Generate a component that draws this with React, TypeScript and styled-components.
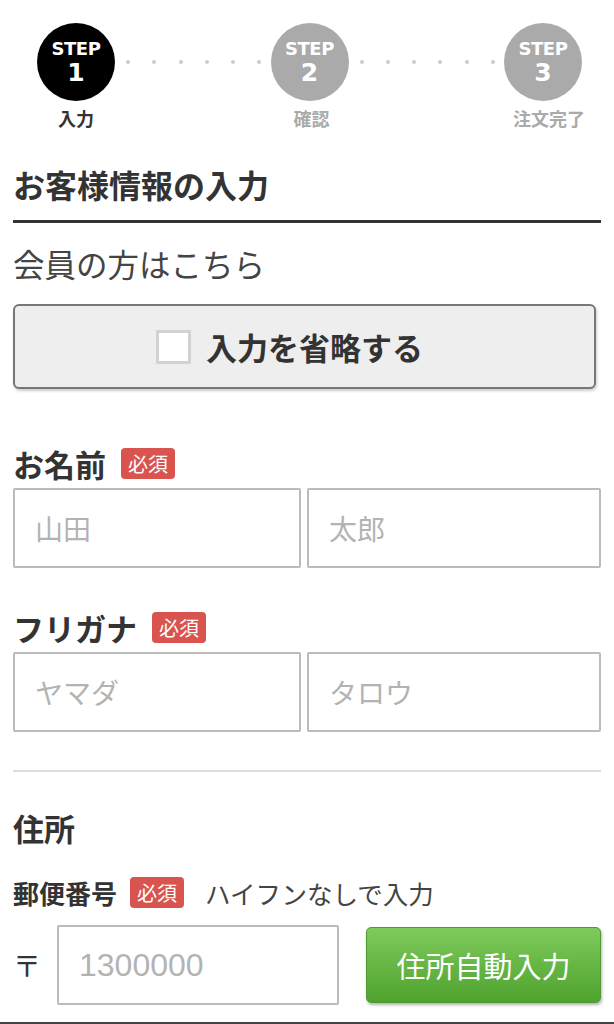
import styled, { createGlobalStyle } from "styled-components";

const GlobalStyle = createGlobalStyle`
  * {
    box-sizing: border-box;
  }

  body {
    margin: 0;
    background: #fff;
    color: #333;
    font-family: "Noto Sans CJK JP", "Noto Sans", sans-serif;
  }
`;

const Page = styled.div`
  width: 614px;
  min-height: 1024px;
  padding: 0 13px;
`;

const StepBar = styled.div`
  display: flex;
  align-items: flex-start;
  padding: 23px 19px 0 24px;
`;

const Step = styled.div`
  width: 78px;
  display: flex;
  flex-direction: column;
  align-items: center;
`;

const Circle = styled.div<{ $active?: boolean }>`
  width: 78px;
  height: 78px;
  border-radius: 50%;
  background: ${(p) => (p.$active ? "#000" : "#aaa")};
  color: #fff;
  display: flex;
  flex-direction: column;
  align-items: center;
  justify-content: center;
  font-family: "DejaVu Sans", sans-serif;
  font-weight: 700;
`;

const StepWord = styled.span`
  font-size: 18px;
  line-height: 17px;
  letter-spacing: -0.4px;
`;

const StepNum = styled.span`
  font-size: 25px;
  line-height: 24px;
  margin-top: 4px;
`;

const StepLabel = styled.span<{ $active?: boolean; $shift?: number }>`
  margin-top: 6px;
  font-size: 18px;
  line-height: 22px;
  font-weight: 700;
  white-space: nowrap;
  color: ${(p) => (p.$active ? "#333" : "#aaa")};
  transform: translateX(${(p) => p.$shift || 0}px);
`;

const Dots = styled.div`
  flex: 1;
  height: 78px;
  display: flex;
  align-items: center;
  justify-content: space-between;
  padding: 0 9px 0 11px;
`;

const Dot = styled.span`
  width: 4px;
  height: 4px;
  border-radius: 50%;
  background: #ccc;
`;

const Heading = styled.h2`
  margin: 35px 0 0;
  padding-bottom: 16px;
  border-bottom: 3px solid #333;
  font-size: 32px;
  line-height: 40px;
  font-weight: 700;
  color: #333;
`;

const MemberLink = styled.div`
  margin-top: 20px;
  font-size: 31.5px;
  line-height: 40px;
  color: #444;
`;

const SkipButton = styled.label`
  margin-top: 21px;
  width: 583px;
  height: 85px;
  display: flex;
  align-items: center;
  justify-content: center;
  gap: 15px;
  padding-right: 30px;
  background: #eee;
  border: 2px solid #777;
  border-radius: 6px;
  box-shadow: 1px 2px 3px rgba(0, 0, 0, 0.2);
  font-size: 31px;
  font-weight: 700;
  color: #333;
`;

const CheckBox = styled.span`
  width: 35px;
  height: 34px;
  background: #fff;
  border: 3px solid #d2d2d2;
`;

const FieldLabel = styled.div<{ $top: number }>`
  margin-top: ${(p) => p.$top}px;
  height: 40px;
  display: flex;
  align-items: center;
  font-size: 31px;
  font-weight: 700;
  color: #333;
`;

const SmallLabel = styled(FieldLabel)`
  font-size: 26px;
`;

const Badge = styled.span<{ $gap: number }>`
  margin-left: ${(p) => p.$gap}px;
  height: 31px;
  padding: 0 7px;
  display: flex;
  align-items: center;
  background: #d9534f;
  border-radius: 4px;
  color: #fff;
  font-size: 20px;
  font-weight: 400;
`;

const Hint = styled.span`
  margin-left: 21px;
  font-size: 25.5px;
  font-weight: 400;
  color: #444;
`;

const InputPair = styled.div`
  margin-top: 5px;
  display: grid;
  grid-template-columns: 288px 1fr;
  gap: 6px;
`;

const TextInput = styled.input`
  height: 80px;
  width: 100%;
  padding: 0 20px;
  border: 2px solid #bbb;
  border-radius: 2px;
  font-family: "Noto Sans CJK JP", sans-serif;
  font-size: 28px;
  color: #333;
  outline: none;

  &::placeholder {
    color: #b3b3b3;
  }
`;

const Divider = styled.hr`
  margin: 38px 0 0;
  border: 0;
  height: 2px;
  background: #ddd;
`;

const SectionTitle = styled.h3`
  margin: 36px 0 0;
  font-size: 31px;
  line-height: 40px;
  font-weight: 700;
  color: #333;
`;

const PostalRow = styled.div`
  margin-top: 13px;
  display: flex;
  align-items: center;
`;

const PostMark = styled.span`
  width: 44px;
  font-size: 28px;
  color: #333;
`;

const PostalInput = styled(TextInput)`
  width: 282px;
  font-family: "Liberation Sans", "Noto Sans", sans-serif;
  font-size: 32px;
`;

const AutoButton = styled.button`
  margin-left: 27px;
  flex: 1;
  height: 76px;
  border: 1px solid #4f9a32;
  border-radius: 5px;
  background: linear-gradient(#7ecb5c, #4fa22e);
  box-shadow: 1px 2px 3px rgba(0, 0, 0, 0.3);
  color: #fff;
  font-family: "Noto Sans CJK JP", sans-serif;
  font-size: 29px;
`;

const BottomEdge = styled.div`
  position: fixed;
  left: 0;
  right: 0;
  bottom: 0;
  height: 2px;
  background: #444;
`;

const steps = [
  { num: 1, label: "入力", shift: 0 },
  { num: 2, label: "確認", shift: 2 },
  { num: 3, label: "注文完了", shift: 6 },
];

const App = () => {
  return (
    <>
      <GlobalStyle />
      <Page>
        <StepBar>
          {steps.map((s, i) => (
            <>
              {i > 0 && (
                <Dots key={`d${i}`}>
                  {[0, 1, 2, 3, 4, 5].map((n) => (
                    <Dot key={n} />
                  ))}
                </Dots>
              )}
              <Step key={s.num}>
                <Circle $active={i === 0}>
                  <StepWord>STEP</StepWord>
                  <StepNum>{s.num}</StepNum>
                </Circle>
                <StepLabel $active={i === 0} $shift={s.shift}>
                  {s.label}
                </StepLabel>
              </Step>
            </>
          ))}
        </StepBar>

        <Heading>お客様情報の入力</Heading>
        <MemberLink>会員の方はこちら</MemberLink>
        <SkipButton>
          <CheckBox />
          入力を省略する
        </SkipButton>

        <FieldLabel $top={54}>
          お名前<Badge $gap={15}>必須</Badge>
        </FieldLabel>
        <InputPair>
          <TextInput placeholder="山田" />
          <TextInput placeholder="太郎" />
        </InputPair>

        <FieldLabel $top={39}>
          フリガナ<Badge $gap={15}>必須</Badge>
        </FieldLabel>
        <InputPair>
          <TextInput placeholder="ヤマダ" />
          <TextInput placeholder="タロウ" />
        </InputPair>

        <Divider />
        <SectionTitle>住所</SectionTitle>

        <SmallLabel $top={24}>
          郵便番号<Badge $gap={13}>必須</Badge>
          <Hint>ハイフンなしで入力</Hint>
        </SmallLabel>
        <PostalRow>
          <PostMark>〒</PostMark>
          <PostalInput placeholder="1300000" />
          <AutoButton>住所自動入力</AutoButton>
        </PostalRow>
      </Page>
      <BottomEdge />
    </>
  );
};

export default App;
